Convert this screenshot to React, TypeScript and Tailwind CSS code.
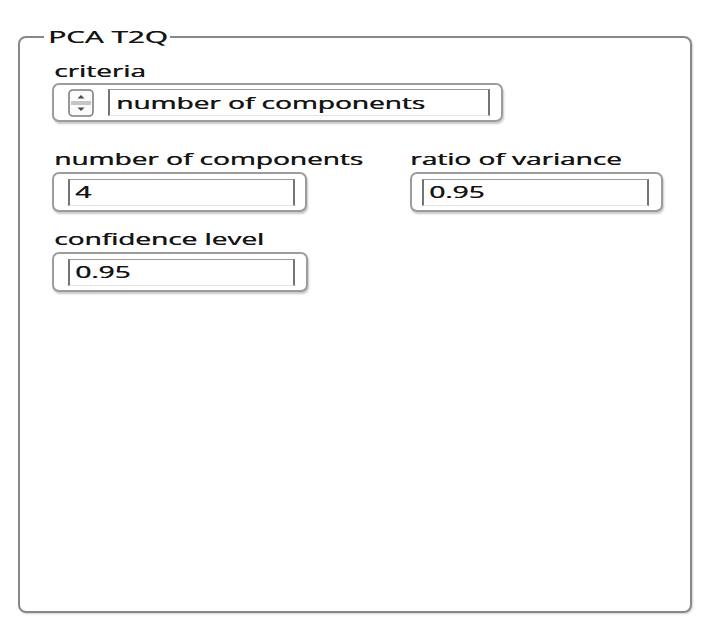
import React from "react";

const Stretch = ({ children }: { children: React.ReactNode }) => (
  <span className="inline-block origin-left scale-x-[1.75] whitespace-nowrap [text-shadow:0.4px_0_0_currentColor]">
    {children}
  </span>
);

const Label = ({ text }: { text: string }) => (
  <div className="h-[20px] pl-[2px]">
    <Stretch>{text}</Stretch>
  </div>
);

const Spinner = () => (
  <svg width="26" height="28" viewBox="0 0 26 28" className="shrink-0">
    <rect x="1" y="1" width="24" height="26" rx="4" fill="#fbfbfb" stroke="#7e7e7e" strokeWidth="1.6" />
    <line x1="3" y1="13" x2="23" y2="13" stroke="#909090" strokeWidth="1" />
    <line x1="3" y1="15" x2="23" y2="15" stroke="#909090" strokeWidth="1" />
    <path d="M9.5 9.5 L13 6 L16.5 9.5 Z" fill="#4a4a4a" />
    <path d="M9.5 18.5 L13 22 L16.5 18.5 Z" fill="#4a4a4a" />
  </svg>
);

const Field = ({
  value,
  frameW,
  innerW,
  pad,
}: {
  value: string;
  frameW: string;
  innerW: string;
  pad: string;
}) => (
  <div
    className={`mt-[3px] flex h-[40px] items-center rounded-[7px] border-2 border-[#9c9c9c] bg-white shadow-[1px_2px_2px_rgba(0,0,0,0.22)] ${frameW} ${pad}`}
  >
    <div
      className={`flex h-[27px] items-center border-x-2 border-t border-b border-x-[#747474] border-t-[#9a9a9a] border-b-[#e4e4e4] bg-white pl-[5px] ${innerW}`}
    >
      <Stretch>{value}</Stretch>
    </div>
  </div>
);

export default function App() {
  return (
    <div className="h-[633px] w-[719px] bg-white pl-[18px] pt-[27px] font-['Open_Sans',sans-serif] text-[16px] leading-[20px] text-[#151515]">
      <fieldset className="h-[586px] w-[674px] rounded-[8px] border-2 border-[#888888] shadow-[1px_1px_2px_rgba(0,0,0,0.18)]">
        <legend className="ml-[24px] w-[126px] pl-[4px] text-[17px] leading-[20px]">
          <Stretch>PCA T2Q</Stretch>
        </legend>

        <div className="pl-[32px] pt-[14px]">
          <Label text="criteria" />
          <div className="mt-[2px] flex h-[39px] w-[451px] items-center rounded-[7px] border-2 border-[#9c9c9c] pl-[14px] shadow-[1px_2px_2px_rgba(0,0,0,0.22)]">
            <Spinner />
            <div className="ml-[14px] flex h-[27px] w-[382px] items-center border-x-2 border-t border-b border-x-[#747474] border-t-[#9a9a9a] border-b-[#e4e4e4] pl-[6px]">
              <Stretch>number of components</Stretch>
            </div>
          </div>

          <div className="mt-[27px] flex">
            <div className="w-[356px]">
              <Label text="number of components" />
              <Field value="4" frameW="w-[255px]" innerW="w-[227px]" pad="pl-[14px]" />
            </div>
            <div>
              <Label text="ratio of variance" />
              <div className="pl-[2px]">
                <Field value="0.95" frameW="w-[253px]" innerW="w-[227px]" pad="pl-[10px]" />
              </div>
            </div>
          </div>

          <div className="mt-[17px]">
            <Label text="confidence level" />
            <Field value="0.95" frameW="w-[256px]" innerW="w-[227px]" pad="pl-[14px]" />
          </div>
        </div>
      </fieldset>
    </div>
  );
}
